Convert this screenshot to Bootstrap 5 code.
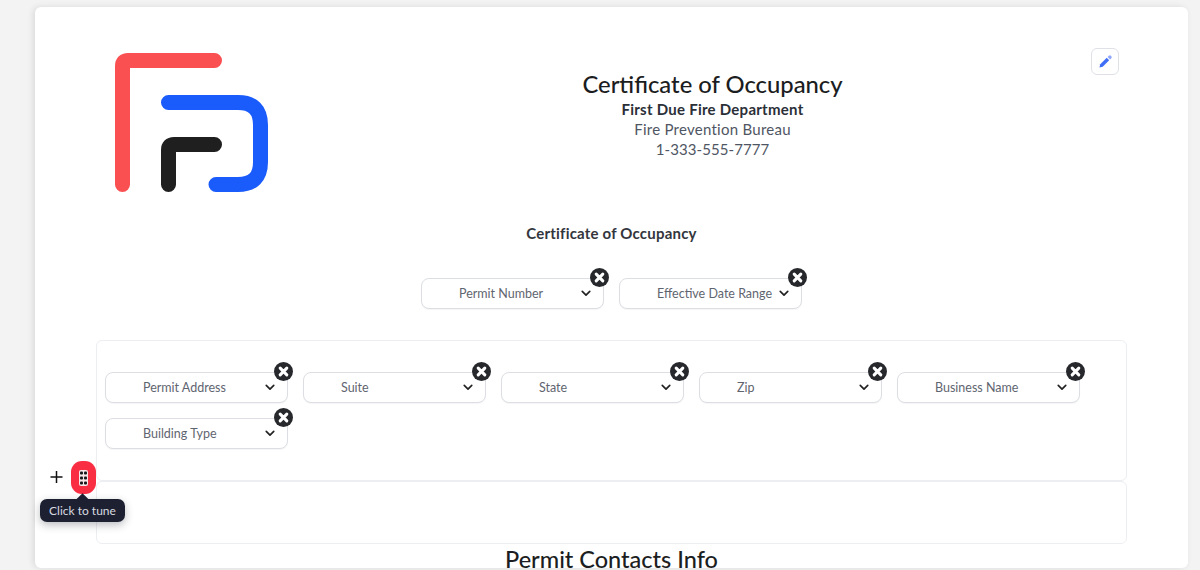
<!DOCTYPE html>
<html lang="en">

<head>
    <meta charset="UTF-8">
    <meta name="viewport" content="width=device-width, initial-scale=1.0">
    <title>Certificate of Occupancy</title>
    <link href="https://cdn.jsdelivr.net/npm/bootstrap@5.3.3/dist/css/bootstrap.min.css" rel="stylesheet">
    <script src="https://cdn.jsdelivr.net/npm/bootstrap@5.3.3/dist/js/bootstrap.bundle.min.js"></script>
    <style>
        html,
        body {
            height: 570px;
            overflow: hidden;
        }

        body {
            background-color: #f3f3f4;
            font-family: "Lato", "Liberation Sans", sans-serif;
            color: #212529;
        }

        .sheet {
            margin: 7px 12px 0 35px;
            height: 561px;
            padding: 0 61px;
            background-color: #fff;
            border-radius: 6px;
            box-shadow: -2px 0 6px rgba(0, 0, 0, 0.1);
            overflow: hidden;
        }

        .head-row {
            padding-top: 33px;
            height: 193px;
        }

        .logo-box {
            width: 202px;
            flex-shrink: 0;
        }

        .head-title {
            font-size: 23.8px;
            line-height: 28px;
            font-weight: 500;
            margin: 30px 0 1px;
            color: #1b1d21;
        }

        .head-line {
            font-size: 15px;
            line-height: 20px;
            letter-spacing: 0.26px;
            color: #4f5663;
        }

        .head-line.strong-line {
            font-weight: 700;
            color: #2b2f38;
        }

        .head-line.phone-line {
            letter-spacing: 0.08px;
        }

        .edit-btn {
            top: 41px;
            right: 8px;
            width: 28px;
            height: 27px;
            background-color: #fff;
            border: 1px solid #dfe1e6;
            border-radius: 6px;
        }

        .form-title {
            font-size: 15px;
            line-height: 20px;
            letter-spacing: 0.2px;
            font-weight: 700;
            color: #33363d;
            margin: 23px 0 35px;
        }

        .chip {
            width: 183px;
        }

        .chip-select {
            --bs-form-select-bg-img: url("data:image/svg+xml,%3csvg xmlns='http://www.w3.org/2000/svg' viewBox='0 0 12 8'%3e%3cpath fill='none' stroke='%23222' stroke-width='2' stroke-linecap='round' stroke-linejoin='round' d='M1.500 1.500 6 6l4.500-4.500'/%3e%3c/svg%3e");
            height: 31px;
            padding: 2px 22px 0 37px;
            font-size: 12.5px;
            color: #5f6570;
            border-color: #dcdee3;
            border-radius: 8px;
            background-size: 10px 7px;
            background-position: right 12px center;
            box-shadow: 0 1px 1px rgba(0, 0, 0, 0.04);
        }

        .chip-close {
            top: -10px;
            right: -5px;
            width: 19px;
            height: 19px;
            padding: 0;
            border: 0;
            border-radius: 50%;
            background-color: #26282c;
        }

        .tune-box {
            border: 1px solid #eceef1;
            border-radius: 6px;
        }

        .tune-box.fields-box {
            margin-top: 31px;
            height: 141px;
            padding: 31px 8px 0;
            column-gap: 15px;
            row-gap: 15px;
        }

        .tune-box.empty-box {
            height: 63px;
        }

        .section-title {
            font-size: 23.5px;
            line-height: 30px;
            font-weight: 500;
            margin: 0;
            color: #1b1d21;
        }

        .tool-plus {
            left: 48px;
            top: 466px;
            width: 17px;
            height: 21px;
        }

        .tool-handle {
            left: 71px;
            top: 461px;
            width: 25px;
            height: 33px;
            background-color: #f92e42;
            border-radius: 11px;
        }

        .tool-tip {
            left: 40px;
            top: 499px;
            width: 85px;
            height: 23px;
            font-size: 12px;
            line-height: 23px;
            color: #d8dae0;
            background-color: #1d2030;
            border-radius: 7px;
            box-shadow: 0 3px 8px rgba(29, 32, 48, 0.3);
        }

        .tool-tip::before {
            content: "";
            position: absolute;
            left: 38px;
            top: -4px;
            width: 9px;
            height: 9px;
            background-color: #1d2030;
            transform: rotate(45deg);
        }
    </style>
</head>

<body>
    <div class="sheet">
        <div class="head-row d-flex position-relative">
            <div class="logo-box">
                <!-- coordinates are page px minus (96, 40) -->
                <svg width="190" height="160" viewBox="0 0 190 160" fill="none" stroke-width="15" stroke-linecap="round"
                    stroke-linejoin="round">
                    <path d="M26.500 144.500V26Q26.500 20.500 32 20.500H118.500" stroke="#fb5052" />
                    <path d="M72.500 62.500H142Q164.500 62.500 164.500 85V122Q164.500 144.500 142 144.500H120" stroke="#1a5bfb" />
                    <path d="M72.500 144.500V110Q72.500 104.500 78 104.500H118.500" stroke="#1f1f1f" />
                </svg>
            </div>
            <div class="flex-grow-1 text-center">
                <h1 class="head-title">Certificate of Occupancy</h1>
                <div class="head-line strong-line">First Due Fire Department</div>
                <div class="head-line">Fire Prevention Bureau</div>
                <div class="head-line phone-line">1-333-555-7777</div>
            </div>
            <button type="button" class="edit-btn position-absolute d-flex align-items-center justify-content-center p-0"
                aria-label="Edit">
                <svg width="13" height="13" viewBox="0 0 16 16">
                    <path d="M9.500 3.500l3 3-8 8-4 1 1-4z" fill="#3f6df6" />
                    <path d="M12.100.9a1.800 1.800 0 0 1 2.500 0l.5.5a1.800 1.800 0 0 1 0 2.500l-1.500 1.500-3-3z" fill="#8fa8fa" />
                </svg>
            </button>
        </div>

        <div class="form-title text-center">Certificate of Occupancy</div>

        <div class="d-flex justify-content-center chip-row" style="gap: 15px">
            <div class="chip position-relative">
                <select class="form-select chip-select">
                    <option>Permit Number</option>
                </select>
                <button type="button" class="chip-close position-absolute d-flex align-items-center justify-content-center"
                    aria-label="Remove"><svg width="11" height="11" viewBox="0 0 10 10" stroke="#fff" stroke-width="2.800"
                        stroke-linecap="round">
                        <path d="M2 2l6 6M8 2l-6 6" />
                    </svg></button>
            </div>
            <div class="chip position-relative">
                <select class="form-select chip-select">
                    <option>Effective Date Range</option>
                </select>
                <button type="button" class="chip-close position-absolute d-flex align-items-center justify-content-center"
                    aria-label="Remove"><svg width="11" height="11" viewBox="0 0 10 10" stroke="#fff" stroke-width="2.800"
                        stroke-linecap="round">
                        <path d="M2 2l6 6M8 2l-6 6" />
                    </svg></button>
            </div>
        </div>

        <div class="tune-box fields-box d-flex flex-wrap align-content-start" id="fieldsBox"></div>
        <div class="tune-box empty-box"></div>

        <h2 class="section-title text-center">Permit Contacts Info</h2>
    </div>

    <svg class="tool-plus position-absolute" viewBox="0 0 17 21" stroke="#111" stroke-width="1.500">
        <path d="M2.500 11H14.500M8.500 5V17" />
    </svg>
    <div class="tool-handle position-absolute d-flex align-items-center justify-content-center">
        <svg width="9" height="16" viewBox="0 0 9 16">
            <rect width="9" height="16" rx="2" fill="#f9e6e8" />
            <g fill="#17171c">
                <rect x="1" y="1.500" width="3" height="3" rx="1" />
                <rect x="5" y="1.500" width="3" height="3" rx="1" />
                <rect x="1" y="6.500" width="3" height="3" rx="1" />
                <rect x="5" y="6.500" width="3" height="3" rx="1" />
                <rect x="1" y="11.500" width="3" height="3" rx="1" />
                <rect x="5" y="11.500" width="3" height="3" rx="1" />
            </g>
        </svg>
    </div>
    <div class="tool-tip position-absolute text-center">Click to tune</div>

    <script>
        const fields = ['Permit Address', 'Suite', 'State', 'Zip', 'Business Name', 'Building Type'];
        const box = document.getElementById('fieldsBox');
        fields.forEach(name => {
            const chip = document.createElement('div');
            chip.className = 'chip position-relative';
            chip.innerHTML = `<select class="form-select chip-select"><option>${name}</option></select>
                <button type="button" class="chip-close position-absolute d-flex align-items-center justify-content-center" aria-label="Remove"><svg width="11" height="11" viewBox="0 0 10 10" stroke="#fff" stroke-width="2.800" stroke-linecap="round"><path d="M2 2l6 6M8 2l-6 6"/></svg></button>`;
            box.appendChild(chip);
        });
    </script>
</body>

</html>
